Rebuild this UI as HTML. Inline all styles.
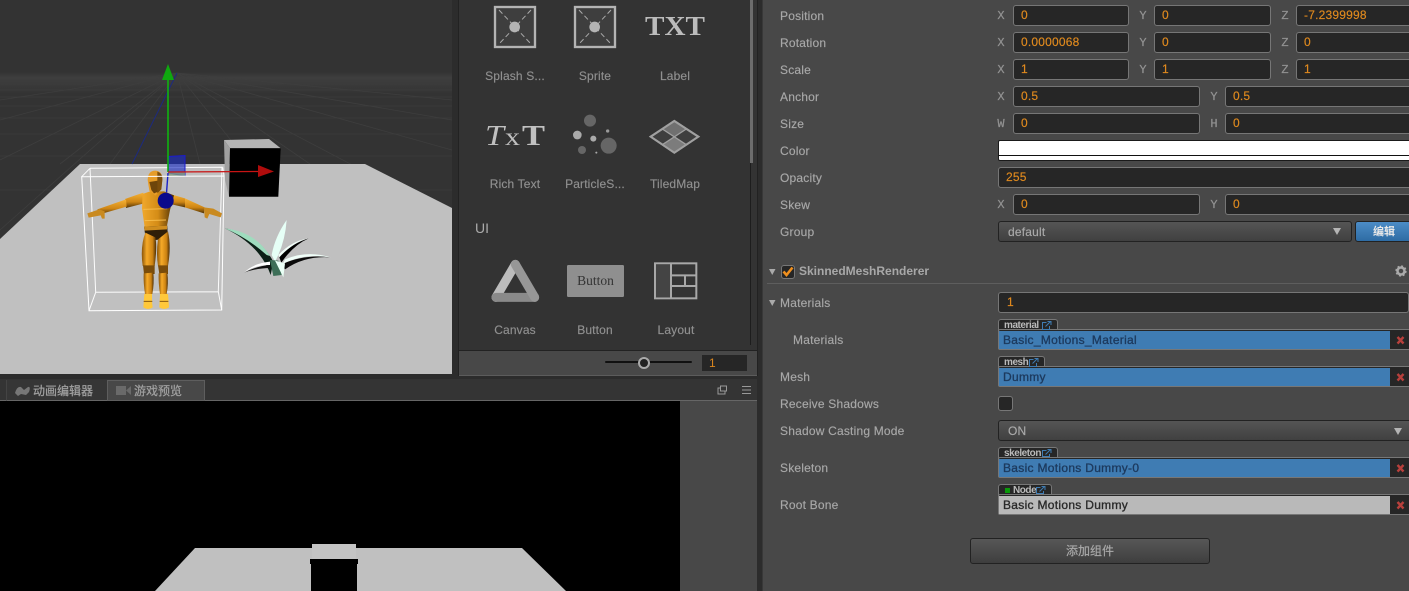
<!DOCTYPE html>
<html><head><meta charset="utf-8">
<style>
html,body{margin:0;padding:0;width:1409px;height:591px;overflow:hidden;background:#2c2c2c;font-family:"Liberation Sans","Noto Sans CJK SC",sans-serif;font-size:12px}
div,span{position:absolute;box-sizing:border-box;white-space:nowrap}
svg{position:absolute;left:0;top:0}
.l{left:780px;color:#a8a8a8;height:16px;line-height:16px;letter-spacing:.2px;-webkit-text-stroke:.15px #a8a8a8}
.a{color:#939393;font-family:"Liberation Mono",monospace;font-size:12px;height:16px;line-height:16px;width:12px;text-align:center;-webkit-text-stroke:.2px #939393}
.i{background:#262626;border:1px solid #767676;border-radius:3px;height:21px;line-height:19px;color:#e08a1e;padding-left:7px;letter-spacing:.2px;overflow:hidden;-webkit-text-stroke:.15px #e08a1e}
.s{background:linear-gradient(#555,#404040);border:1px solid #222;border-radius:3px;height:21px;line-height:20px;color:#aaa;padding-left:9px;letter-spacing:.2px;-webkit-text-stroke:.15px #aaa}
.c{color:#909090;width:80px;text-align:center;height:16px;line-height:16px;letter-spacing:.15px;-webkit-text-stroke:.15px #909090}
.tag{background:#262626;border:1px solid #777;border-bottom:0;border-radius:3px 3px 0 0;height:12px;line-height:11px;font-size:10px;font-weight:bold;color:#bbb;padding-left:5px;letter-spacing:-.45px}
.f{left:998px;width:411px;height:21px;background:#262626;border:1px solid #777;border-right:0;border-radius:2px 0 0 2px}
.v{left:0;top:1px;height:18px;width:391px;line-height:18px;color:#1d3a5e;background:#3f7cb3;padding-left:4px;letter-spacing:.3px;-webkit-text-stroke:.35px #1d3a5e}
</style></head>
<body>

<!-- scene -->
<div style="left:0;top:0;width:452px;height:374px;background:#333;overflow:hidden">
<svg width="452" height="374">
<defs>
<linearGradient id="gh" x1="0" y1="0" x2="0" y2="1"><stop offset="0" stop-color="#4a4a4a" stop-opacity="0"/><stop offset=".25" stop-color="#4a4a4a" stop-opacity=".5"/><stop offset="1" stop-color="#4a4a4a" stop-opacity="0"/></linearGradient>
<linearGradient id="lg" x1="0" y1="0" x2="1" y2="0"><stop offset="0" stop-color="#8a5408"/><stop offset=".35" stop-color="#f6aa28"/><stop offset=".75" stop-color="#cc8212"/><stop offset="1" stop-color="#4a2d05"/></linearGradient>
<linearGradient id="ar" x1="0" y1="0" x2="0" y2="1"><stop offset="0" stop-color="#f6b236"/><stop offset=".6" stop-color="#cf8614"/><stop offset="1" stop-color="#4f3206"/></linearGradient>
<linearGradient id="to" x1="0" y1="0" x2="1" y2="0"><stop offset="0" stop-color="#f0a82c"/><stop offset=".5" stop-color="#d48c16"/><stop offset="1" stop-color="#4a2d05"/></linearGradient>
</defs>
<rect x="0" y="72" width="452" height="22" fill="url(#gh)"/>
<g stroke="#3e3e3e" stroke-width=".8" fill="none">
<path d="M0 84H452M0 90H452M0 97H452M0 106H452M0 118H452M0 134H452M0 156H452M0 190H452"/>
<path d="M177 73L0 100M177 73L0 120M177 73L0 160M177 73L0 230M177 73L60 164M177 73L110 164M177 73L200 164M177 73L250 164M177 73L310 164M177 73L400 190M177 73L452 150M177 73L452 120M177 73L452 100"/>
</g>
<polygon points="80,164 365,164 452,208 452,374 0,374 0,239" fill="#c0c0c0"/>
<line x1="177" y1="73" x2="132" y2="164" stroke="#1c2a80" stroke-width="1"/>
<!-- cube -->
<polygon points="224,140 269,139 280.7,148.3 230,148.3" fill="#b4b4b4"/>
<polygon points="224,140 230,148.3 229,196.7 225,180" fill="#a0a0a0"/>
<polygon points="230,148.3 280.7,148.3 278.3,196.7 229,196.7" fill="#000"/>
<!-- wire box back -->
<g stroke="#fff" stroke-width="1" fill="none" opacity=".95">
<path d="M90 168.3L222.7 167.3M95.7 292.3L218.3 291.7M90 168.3L95.7 292.3M222 167.5L218.3 291.7M90 168.3L81.7 176.7M222.7 167.3L224 176M95.7 292.3L89 310.7M218.3 291.700L221.700 310"/>
</g>
<!-- gizmo -->
<polygon points="168.5,156.5 185,155.5 185,176 168.5,173" fill="#1f2fc0" fill-opacity=".65" stroke="#1a1ad0" stroke-width="1"/>
<rect x="168" y="172" width="17" height="4" fill="#7f9a7f" opacity=".8"/>
<line x1="168" y1="80" x2="168" y2="172" stroke="#0fb40f" stroke-width="1.6"/>
<polygon points="168,64 162,80 174,80" fill="#0fa80f"/>
<line x1="168" y1="172" x2="258" y2="171.500" stroke="#c81414" stroke-width="1.2"/>
<polygon points="258,165 274,171.500 258,177" fill="#b00c0c"/>
<line x1="168" y1="173" x2="166.500" y2="193" stroke="#1820c8" stroke-width="1.400"/>
<!-- character -->
<g transform="translate(70,130) scale(.33333)">
<path d="M220 188L165 207L168 234L222 220Z" fill="url(#ar)"/>
<path d="M168 208L82 238L86 254L170 230Z" fill="url(#ar)"/>
<path d="M52 250L88 238L104 244L104 266L96 266L92 256L56 263Z" fill="#c98a20"/>
<path d="M300 192L345 205L345 232L300 222Z" fill="url(#ar)"/>
<path d="M345 205L404 232L402 250L345 232Z" fill="url(#ar)"/>
<path d="M402 232L430 236L456 250L452 262L418 252L412 266L404 262Z" fill="#c98a20"/>
<path d="M218 192L240 184H282L312 196L300 240L290 292H224L216 235Z" fill="url(#to)"/>
<path d="M220 238L292 236M224 272L288 270" stroke="#f6bb48" stroke-width="3" fill="none"/>
<path d="M222 290L292 287L293 312Q262 345 226 318Z" fill="#2f1f08"/>
<path d="M222 290L292 287L291 298L224 302Z" fill="#cf8d1e"/>
<path d="M226 308Q210 350 218 408H254Q262 350 256 322Z" fill="url(#lg)"/>
<path d="M264 328Q258 370 264 408H294Q304 350 294 304Z" fill="url(#lg)"/>
<path d="M219 406H254V432H222Z" fill="#7a4c0a"/><path d="M264 406H294V432H268Z" fill="#7a4c0a"/>
<path d="M221 430Q220 460 225 492H247Q253 460 250 428Z" fill="url(#lg)"/>
<path d="M266 430Q265 460 270 492H290Q296 460 292 428Z" fill="url(#lg)"/>
<path d="M223 492H246V515L248 532Q234 542 220 532Z" fill="#ffc83a"/>
<path d="M270 492H294L297 532Q282 542 268 532Z" fill="#ffc83a"/>
<path d="M221 514H247M269 514H295" stroke="#8a5a10" stroke-width="3"/>
<path d="M233 150Q234 122 256 122Q278 123 277 150L274 178L256 197L238 182Z" fill="#e69c28"/>
<path d="M238 156L264 152L270 164L262 186L252 190L244 180Z" fill="#6e450b"/>
<path d="M262 125Q278 130 277 150L274 178L262 190Z" fill="#7c4e0c"/>
</g>
<circle cx="165.700" cy="200.700" r="8" fill="#0a0a8c"/>
<!-- wire box front -->
<g stroke="#fff" stroke-width="1" fill="none"><path d="M81.700 176.700L224 176L221.700 310L89 310.700Z"/></g>
<!-- plant -->
<g transform="translate(210,130) scale(.33333)">
<path d="M45 295Q145 310 190 395L182 435Q150 345 45 295Z" fill="#0b1f16"/>
<path d="M45 295Q135 305 180 378L170 375Q115 325 45 295Z" fill="#9fdcbe"/>
<path d="M230 270Q225 340 195 395L185 375Q195 320 230 270Z" fill="#e6fff6"/>
<path d="M296 325Q248 335 210 385L205 375Q245 332 296 325Z" fill="#f2fff9"/>
<path d="M296 325Q250 345 214 398L208 382Q245 340 296 325Z" fill="#000"/>
<path d="M362 382Q285 376 225 418L216 402Q285 372 362 382Z" fill="#0a0a0a"/>
<path d="M362 382Q290 360 225 388L218 402Q285 368 362 382Z" fill="#f0fff9"/>
<path d="M102 428Q130 400 180 395L180 405Q135 405 102 428Z" fill="#fff"/>
<path d="M102 428Q140 408 180 405L182 414Q140 414 102 428Z" fill="#111"/>
<path d="M180 390L205 392L215 435L190 438Z" fill="#3e6f58"/>
<path d="M195 392L225 400L220 442Z" fill="#eafff6"/>
</g>
</svg>
</div>

<!-- asset panel -->
<div style="left:458px;top:0;width:300px;height:376px;background:#333;border-left:1px solid #222;border-right:1px solid #222"></div>
<div style="left:750px;top:0;width:3px;height:163px;background:#6c6c6c"></div>
<div style="left:750px;top:163px;width:1px;height:182px;background:#1d1d1d"></div>
<svg width="760" height="376">
<g transform="translate(455,0) scale(.33333)">
<rect x="120" y="21" width="120" height="120" fill="#3e3e3e" stroke="#b4b4b4" stroke-width="7"/>
<path d="M132 30L228 132M228 30L132 132" stroke="#aaa" stroke-width="3" stroke-dasharray="15 9"/>
<circle cx="179" cy="81" r="16" fill="#b4b4b4"/>
<rect x="360" y="21" width="120" height="120" fill="#3e3e3e" stroke="#b4b4b4" stroke-width="7"/>
<path d="M372 30L468 132M468 30L372 132" stroke="#aaa" stroke-width="3" stroke-dasharray="15 9"/>
<circle cx="419" cy="81" r="16" fill="#b4b4b4"/>
<!-- particles -->
<circle cx="405" cy="362" r="18" fill="#666"/><circle cx="367" cy="405" r="13" fill="#aaa"/><circle cx="415" cy="416" r="9" fill="#aaa"/><circle cx="458" cy="393" r="5" fill="#999"/><circle cx="461" cy="437" r="24" fill="#666"/><circle cx="381" cy="450" r="12" fill="#666"/><circle cx="424" cy="458" r="3" fill="#aaa"/>
<!-- tiled -->
<polygon points="658,363 730,410 658,458 587,410" fill="#3e3e3e" stroke="#a0a0a0" stroke-width="6"/>
<polygon points="658,363 694,387 658,410 622,387" fill="#707070"/>
<polygon points="658,410 694,434 658,458 622,434" fill="#7c7c7c"/>
<path d="M622 387L694 434M694 387L622 434" stroke="#a0a0a0" stroke-width="4"/>
<path d="M658 363L730 410L658 458L587 410Z" fill="none" stroke="#a0a0a0" stroke-width="6"/>
</g>
<g transform="translate(455,200) scale(.33333)">
<!-- canvas -->
<path d="M181 193L123 292" stroke="#bcbcbc" stroke-width="27" stroke-linecap="round"/>
<path d="M123 292H239" stroke="#8a8a8a" stroke-width="27" stroke-linecap="round"/>
<path d="M181 193L239 292" stroke="#979797" stroke-width="27" stroke-linecap="round"/>
<!-- button -->
<rect x="336" y="195" width="171" height="96" rx="4" fill="#8f8f8f"/>
<!-- layout -->
<rect x="600" y="190" width="124" height="105" fill="#343434" stroke="#a8a8a8" stroke-width="6"/>
<rect x="603" y="193" width="45" height="99" fill="#444"/>
<path d="M648 190V295M648 226H724M648 258H724M690 226V258" stroke="#a8a8a8" stroke-width="6" fill="none"/>
</g>
<text x="645" y="35" font-family="Liberation Serif,serif" font-size="27" font-weight="bold" fill="#bcbcbc" textLength="60" lengthAdjust="spacingAndGlyphs">TXT</text>
<text x="485" y="145" font-family="Liberation Serif,serif" font-size="29" font-style="italic" fill="#c0c0c0" textLength="19" lengthAdjust="spacingAndGlyphs">T</text>
<text x="505" y="145" font-family="Liberation Serif,serif" font-size="25" fill="#c0c0c0" textLength="15" lengthAdjust="spacingAndGlyphs">x</text>
<text x="522" y="145" font-family="Liberation Serif,serif" font-size="29" font-weight="bold" fill="#c0c0c0" textLength="23" lengthAdjust="spacingAndGlyphs">T</text>
<text x="595.500" y="285" text-anchor="middle" font-family="Liberation Serif,serif" font-size="13.500" fill="#333">Button</text>
</svg>
<div class="c" style="left:475px;top:68px">Splash S...</div>
<div class="c" style="left:555px;top:68px">Sprite</div>
<div class="c" style="left:635px;top:68px">Label</div>
<div class="c" style="left:475px;top:176px">Rich Text</div>
<div class="c" style="left:555px;top:176px">ParticleS...</div>
<div class="c" style="left:635px;top:176px">TiledMap</div>
<div style="left:475px;top:220px;color:#aaa;font-size:14px;line-height:16px;height:16px">UI</div>
<div class="c" style="left:475px;top:322px">Canvas</div>
<div class="c" style="left:555px;top:322px">Button</div>
<div class="c" style="left:636px;top:322px">Layout</div>
<!-- toolbar -->
<div style="left:459px;top:350px;width:298px;height:26px;background:#484848;border-top:1px solid #222;border-bottom:1px solid #5c5c5c"></div>
<div style="left:605px;top:361px;width:87px;height:2px;background:#111;border-radius:1px"></div>
<div style="left:638px;top:357px;width:12px;height:12px;border-radius:50%;background:#222;border:2px solid #aaa"></div>
<div style="left:702px;top:355px;width:45px;height:16px;background:#262626;color:#d9861f;padding-left:7px;line-height:17px">1</div>

<!-- bottom tabs -->
<div style="left:0;top:379px;width:757px;height:22px;background:#343434;border-bottom:1px solid #666"></div>
<div style="left:6px;top:380px;width:101px;height:21px;background:#363636;border-left:1px solid #444;border-bottom:1px solid #666;color:#a0a0a0;line-height:23px;padding-left:26px;-webkit-text-stroke:.25px #a0a0a0">动画编辑器</div>
<div style="left:107px;top:380px;width:98px;height:21px;background:#484848;border:1px solid #5e5e5e;color:#a0a0a0;line-height:21px;padding-left:26px;-webkit-text-stroke:.25px #a0a0a0">游戏预览</div>
<svg width="230" height="401" style="pointer-events:none">
<path d="M15 393Q17 386 21 387L24 390L28 387Q31 386 29 392L26 395L21 394L18 396Z" fill="#777"/>
<rect x="116" y="386" width="10" height="9" fill="#6a6a6a"/><path d="M126 390.500L131 386V395Z" fill="#6a6a6a"/>
</svg>
<svg width="757" height="401" style="pointer-events:none">
<rect x="718" y="388" width="7" height="6" fill="none" stroke="#999"/><rect x="720.500" y="386" width="6" height="5" fill="#343434" stroke="#999"/>
<path d="M742 386.500H751M742 390H751M742 393.500H751" stroke="#999" stroke-width="1"/>
</svg>

<!-- game view -->
<div style="left:0;top:401px;width:680px;height:190px;background:#000;overflow:hidden">
<svg width="680" height="190">
<polygon points="195,147 522,147 566,190 155,190" fill="#c0c0c0"/>
<rect x="312" y="143" width="44" height="15" fill="#c4c4c4"/>
<rect x="310" y="158" width="48" height="5" fill="#000"/>
<rect x="311" y="163" width="46" height="27" fill="#000"/>
</svg>
</div>
<div style="left:680px;top:401px;width:77px;height:190px;background:#484848"></div>

<!-- inspector -->
<div style="left:762px;top:0;width:647px;height:591px;background:#484848;border-left:1px solid #383838"></div>

<div class="l" style="top:8px">Position</div>
<div class="a" style="left:995px;top:8px">X</div><div class="i" style="left:1013px;top:5px;width:116px">0</div>
<div class="a" style="left:1137px;top:8px">Y</div><div class="i" style="left:1154px;top:5px;width:117px">0</div>
<div class="a" style="left:1279px;top:8px">Z</div><div class="i" style="left:1296px;top:5px;width:120px">-7.2399998</div>

<div class="l" style="top:35px">Rotation</div>
<div class="a" style="left:995px;top:35px">X</div><div class="i" style="left:1013px;top:32px;width:116px">0.0000068</div>
<div class="a" style="left:1137px;top:35px">Y</div><div class="i" style="left:1154px;top:32px;width:117px">0</div>
<div class="a" style="left:1279px;top:35px">Z</div><div class="i" style="left:1296px;top:32px;width:120px">0</div>

<div class="l" style="top:62px">Scale</div>
<div class="a" style="left:995px;top:62px">X</div><div class="i" style="left:1013px;top:59px;width:116px">1</div>
<div class="a" style="left:1137px;top:62px">Y</div><div class="i" style="left:1154px;top:59px;width:117px">1</div>
<div class="a" style="left:1279px;top:62px">Z</div><div class="i" style="left:1296px;top:59px;width:120px">1</div>

<div class="l" style="top:89px">Anchor</div>
<div class="a" style="left:995px;top:89px">X</div><div class="i" style="left:1013px;top:86px;width:187px">0.5</div>
<div class="a" style="left:1208px;top:89px">Y</div><div class="i" style="left:1225px;top:86px;width:190px">0.5</div>

<div class="l" style="top:116px">Size</div>
<div class="a" style="left:995px;top:116px">W</div><div class="i" style="left:1013px;top:113px;width:187px">0</div>
<div class="a" style="left:1208px;top:116px">H</div><div class="i" style="left:1225px;top:113px;width:190px">0</div>

<div class="l" style="top:143px">Color</div>
<div style="left:998px;top:140px;width:420px;height:21px;background:#fff;border:1px solid #1a1a1a;border-radius:2px"></div>
<div style="left:998px;top:155px;width:411px;height:1px;background:#111"></div>

<div class="l" style="top:170px">Opacity</div>
<div class="i" style="left:998px;top:167px;width:420px">255</div>

<div class="l" style="top:197px">Skew</div>
<div class="a" style="left:995px;top:197px">X</div><div class="i" style="left:1013px;top:194px;width:187px">0</div>
<div class="a" style="left:1208px;top:197px">Y</div><div class="i" style="left:1225px;top:194px;width:190px">0</div>

<div class="l" style="top:224px">Group</div>
<div class="s" style="left:998px;top:221px;width:354px">default</div>
<div style="left:1355px;top:221px;width:60px;height:21px;background:linear-gradient(#4c8cc6,#2e6ca4);border:1px solid #222;border-radius:3px;color:#e8e8e8;line-height:20px;font-size:11px;padding-left:17px;font-weight:bold">编辑</div>

<div style="left:781px;top:265px;width:14px;height:14px;background:#262626;border:1px solid #777;border-radius:3px"></div>
<div style="left:799px;top:263px;height:16px;line-height:16px;color:#a8a8a8;font-weight:bold">SkinnedMeshRenderer</div>
<div style="left:767px;top:283px;width:642px;height:1px;background:#5e5e5e"></div>

<div class="l" style="top:295px">Materials</div>
<div class="i" style="left:998px;top:292px;width:411px;padding-left:8px">1</div>

<div class="l" style="left:793px;top:332px">Materials</div>
<div class="tag" style="left:998px;top:319px;width:60px">material</div>
<div class="f" style="top:329px"><div class="v">Basic_Motions_Material</div></div>

<div class="l" style="top:369px">Mesh</div>
<div class="tag" style="left:998px;top:356px;width:47px">mesh</div>
<div class="f" style="top:366px"><div class="v">Dummy</div></div>

<div class="l" style="top:396px">Receive Shadows</div>
<div style="left:998px;top:396px;width:15px;height:15px;background:#262626;border:1px solid #777;border-radius:3px"></div>

<div class="l" style="top:423px">Shadow Casting Mode</div>
<div class="s" style="left:998px;top:420px;width:420px">ON</div>

<div class="l" style="top:460px">Skeleton</div>
<div class="tag" style="left:998px;top:447px;width:60px">skeleton</div>
<div class="f" style="top:457px"><div class="v">Basic Motions Dummy-0</div></div>

<div class="l" style="top:497px">Root Bone</div>
<div class="tag" style="left:998px;top:484px;width:54px;padding-left:14px">Node<div style="left:6px;top:3px;width:5px;height:5px;background:#0a9a0a"></div></div>
<div class="f" style="top:494px"><div class="v" style="background:#b9b9b9;color:#2a2a2a;-webkit-text-stroke:.35px #2a2a2a">Basic Motions Dummy</div></div>

<svg width="1409" height="591" style="pointer-events:none">
<path d="M1333 228H1341L1337 235Z" fill="#b5b5b5"/>
<path d="M1394 428H1402L1398 435Z" fill="#b5b5b5"/>
<path d="M769 269H775.500L772.250 275Z" fill="#aaa"/>
<path d="M769 300H775.500L772.250 306Z" fill="#aaa"/>
<circle cx="1401" cy="271" r="3.500" fill="none" stroke="#aaa" stroke-width="2.500"/>
<circle cx="1401" cy="271" r="5" fill="none" stroke="#aaa" stroke-width="1.300" stroke-dasharray="2 1.930"/>
<path d="M783.500 271.500L786.500 275L792.500 267.500" fill="none" stroke="#ef8f1e" stroke-width="2.600"/>
<g stroke="#b8403c" stroke-width="2.400" fill="none">
<path d="M1397.500 337L1403.500 343.500M1403.500 337L1397.500 343.500"/>
<path d="M1397.500 374L1403.500 380.500M1403.500 374L1397.500 380.500"/>
<path d="M1397.500 465L1403.500 471.500M1403.500 465L1397.500 471.500"/>
<path d="M1397.500 502L1403.500 508.500M1403.500 502L1397.500 508.500"/>
</g>
<g fill="none" stroke="#3f7cb3" stroke-width="1">
<path d="M1046.500 322.500H1042.500V329.500H1049.500V326M1045.500 326.500L1050.500 321.500M1047.500 321.500H1051V325"/>
<path d="M1033.500 359.500H1029.500V366.500H1036.500V363M1032.500 363.500L1037.500 358.500M1034.500 358.500H1038V362"/>
<path d="M1046.500 450.500H1042.500V456.500H1049.500V454M1045.500 454.500L1050.500 449.500M1047.500 449.500H1051V453"/>
<path d="M1040.500 487.500H1036.500V493.500H1043.500V491M1039.500 491.500L1044.500 486.500M1041.500 486.500H1045V490"/>
</g>
</svg>

<div style="left:970px;top:538px;width:240px;height:26px;background:linear-gradient(#575757,#3e3e3e);border:1px solid #222;border-radius:3px;color:#a8a8a8;text-align:center;line-height:25px;-webkit-text-stroke:.2px #a8a8a8">添加组件</div>
</body></html>
